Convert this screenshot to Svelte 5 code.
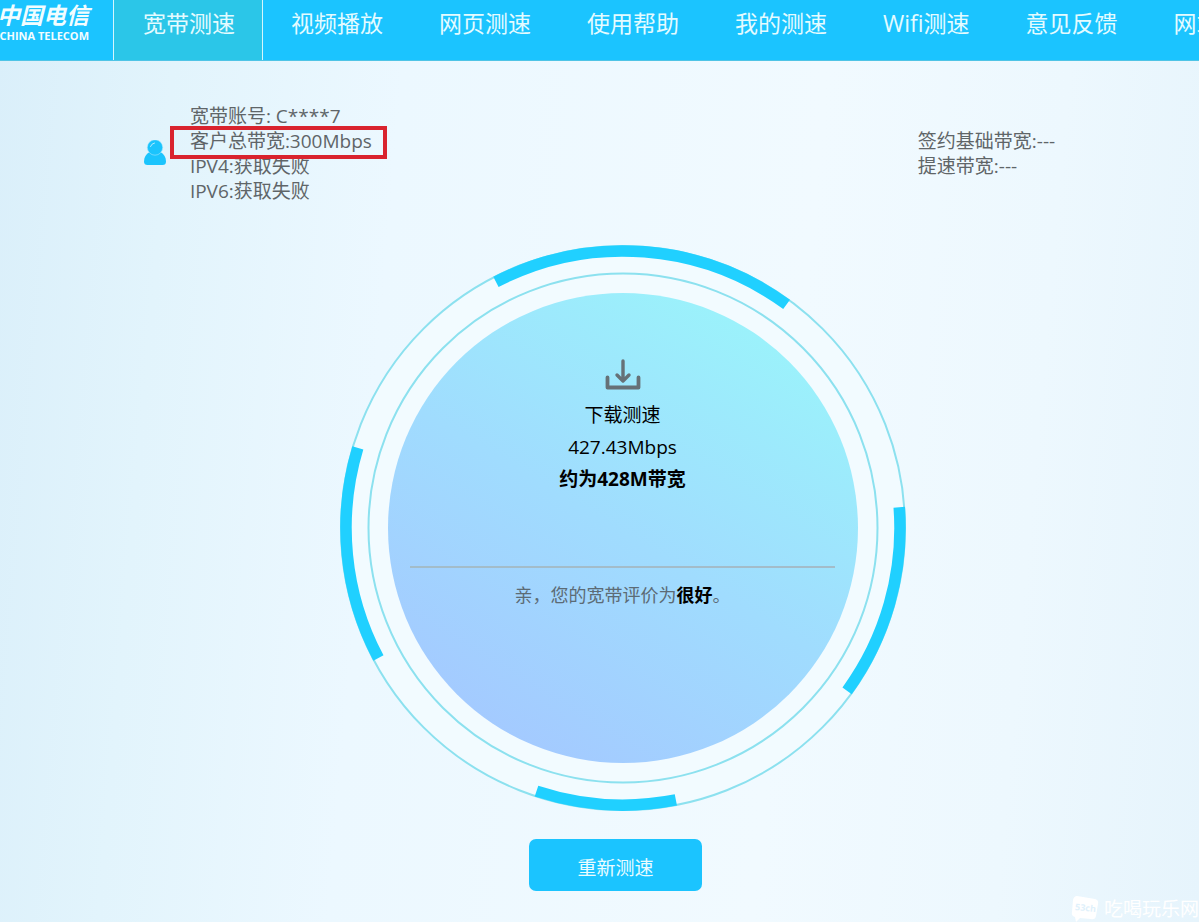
<script lang="ts">
  interface Arc {
    from: number;
    to: number;
  }

  const links = ['宽带测速', '视频播放', '网页测速', '使用帮助', '我的测速', 'Wifi测速', '意见反馈', '网站导航'];
  let active = $state('宽带测速');

  const account = {
    id: 'C****7',
    bandwidth: '300Mbps',
    ipv4: '获取失败',
    ipv6: '获取失败',
    base: '---',
    boost: '---'
  };

  const result = { speed: '427.43Mbps', approx: '约为428M带宽', grade: '很好' };

  // thick segments on the outer ring, degrees clockwise from 3 o'clock
  const arcs: Arc[] = [
    { from: -117.3, to: -53.8 },
    { from: -4.3, to: 36 },
    { from: 79, to: 108.2 },
    { from: 152, to: 196.8 }
  ];

  function arcPath({ from, to }: Arc) {
    const r = 277;
    const point = (deg: number) => {
      const a = (deg * Math.PI) / 180;
      return `${283 + r * Math.cos(a)} ${283 + r * Math.sin(a)}`;
    };
    return `M${point(from)}A${r} ${r} 0 0 1 ${point(to)}`;
  }
</script>

<div class="page">
  <header>
    <a href="#home" class="logo">
      <span class="logo-cn">中国电信</span>
      <span class="logo-en">CHINA TELECOM</span>
    </a>
    <nav>
      {#each links as link}
        <a href="#{link}" class:active={active === link} onclick={() => (active = link)}>{link}</a>
      {/each}
    </nav>
  </header>

  <main>
    <section class="info">
      <div class="account">
        <svg class="user" viewBox="0 0 22 28" aria-hidden="true">
          <path d="M5.500 12C2 14 0 17.500 0 21.500Q0 25 3.500 25H18.500Q22 25 22 21.500C22 17.500 20 14 16.500 12Z" fill="#1bc4fd" />
          <circle cx="11" cy="7.500" r="7.700" fill="#1bc4fd" stroke="#a5e4fb" stroke-width="0.600" />
          <path d="M6.500 6.500Q7.500 3.500 10.500 3" fill="none" stroke="#b5ebff" stroke-width="1" stroke-linecap="round" />
        </svg>
        <ul>
          <li>宽带账号: {account.id}</li>
          <li><span class="marked">客户总带宽:{account.bandwidth}</span></li>
          <li>IPV4:{account.ipv4}</li>
          <li>IPV6:{account.ipv6}</li>
        </ul>
      </div>
      <ul>
        <li>签约基础带宽:{account.base}</li>
        <li>提速带宽:{account.boost}</li>
      </ul>
    </section>

    <section class="dial-row">
      <div class="dial">
        <svg class="rings" viewBox="0 0 566 566" aria-hidden="true">
          <defs>
            <linearGradient id="disc" x1="0.2" y1="0.95" x2="0.75" y2="0.05">
              <stop offset="0" stop-color="#a4c9ff" />
              <stop offset="0.5" stop-color="#a0dcfe" />
              <stop offset="1" stop-color="#9bf2fb" />
            </linearGradient>
          </defs>
          <circle cx="283" cy="283" r="282" fill="#f2fbff" stroke="#8ce1ef" stroke-width="2" />
          <circle cx="283" cy="283" r="254.500" fill="none" stroke="#8ce1ef" stroke-width="2" />
          <circle cx="283" cy="283" r="235" fill="url(#disc)" />
          {#each arcs as arc}
            <path d={arcPath(arc)} fill="none" stroke="#20d0ff" stroke-width="11.500" />
          {/each}
        </svg>

        <div class="result">
          <svg class="download" viewBox="0 0 36 32" aria-hidden="true">
            <g fill="none" stroke="#667177" stroke-linejoin="round" stroke-linecap="round">
              <path d="M2.500 18.500V28.500H33.500V18.500" stroke-width="3.800" />
              <path d="M18 2V21M12 16L18 22L24 16" stroke-width="3.400" />
            </g>
          </svg>
          <p>下载测速</p>
          <p>{result.speed}</p>
          <p><strong>{result.approx}</strong></p>
          <hr />
          <p class="verdict">亲，您的宽带评价为<strong>{result.grade}</strong>。</p>
        </div>
      </div>
    </section>

    <div class="actions">
      <button type="button">重新测速</button>
    </div>
  </main>

  <div class="watermark">
    <svg viewBox="0 0 28 27" aria-hidden="true">
      <path d="M6 1L24 4Q28 5 27 9L25 21Q24 25 20 24L9 23L5 27L4 22Q0 21 1 17L2 5Q3 1 6 1Z" fill="#fff" />
      <text x="4" y="16" transform="rotate(6 14 14)">53ch</text>
    </svg>
    <span>吃喝玩乐网</span>
  </div>
</div>

<style>
  :global(body) { margin: 0; }

  .page {
    position: relative; min-height: 100vh; overflow: hidden; box-sizing: border-box; padding-bottom: 30px;
    font-family: "Open Sans", "Noto Sans CJK SC", sans-serif; font-size: 19px; color: #5f6568;
    background: linear-gradient(95deg, #daeffa 0%, #e2f4fc 14%, #ecf8ff 32%, #f1faff 65%, #edf8fe 84%, #e6f4fc 100%);
  }

  header { display: flex; height: 60px; overflow: hidden; background: #1bc4ff; border-bottom: 1px solid #4fc4e6; }
  .logo {
    flex: 0 0 113px; box-sizing: border-box; padding-right: 24px; overflow: hidden;
    display: flex; flex-direction: column; align-items: flex-end; color: #f2fdff; text-decoration: none; white-space: nowrap;
  }
  .logo-cn { font-size: 23px; line-height: 30px; font-weight: bold; font-style: italic; }
  .logo-en { font-size: 11px; line-height: 12px; font-weight: bold; }

  nav { display: flex; }
  nav a {
    flex: none; padding: 0 28px 14px; font-size: 23px; line-height: 46px;
    color: #e4fbff; text-decoration: none; white-space: nowrap;
  }
  nav .active { background: #2bc6e8; border: solid #d5f6fd; border-width: 0 1px; padding-left: 29px; padding-right: 27px; }

  .info { display: flex; justify-content: space-between; align-items: center; padding: 43px 12% 0; }
  .account { display: flex; align-items: center; gap: 24px; }
  .user { width: 22px; height: 28px; }
  ul { margin: 0; padding: 0; list-style: none; line-height: 25px; }
  .marked { position: relative; display: inline-block; }
  .marked::after { content: ""; position: absolute; inset: -3px -15px -5px -20px; border: 4px solid #d9232e; }

  .dial-row { display: flex; justify-content: center; padding: 41px 0 0 46px; }
  .dial { display: grid; width: 566px; max-width: 100%; }
  .rings, .result { grid-area: 1 / 1; }
  .rings { width: 100%; display: block; }
  .result { width: 75%; margin: 0 auto; padding-top: 114px; text-align: center; line-height: 32px; color: #000; z-index: 1; }
  .download { display: block; width: 36px; height: 32px; margin: 0 auto 8px; }
  p { margin: 0; }
  hr { height: 2px; margin: 71px 0 11px; border: none; background: #a3bcc9; }
  .verdict { font-size: 18px; color: #5c6b75; }
  .verdict strong { color: #000; }

  .actions { display: flex; justify-content: center; padding: 28px 0 0 32px; }
  button {
    width: 173px; height: 52px; padding: 3px 0 0; border: none; border-radius: 7px; cursor: pointer;
    background: #1bc4ff; color: #eafcff; font: inherit;
  }

  .watermark {
    position: absolute; right: 0; bottom: 0; display: flex; align-items: center; gap: 5px;
    color: #fff; font-size: 19px; line-height: 26px;
  }
  .watermark svg { width: 28px; height: 27px; }
  .watermark text { font-size: 9px; font-weight: bold; fill: #dff1fb; }
</style>
